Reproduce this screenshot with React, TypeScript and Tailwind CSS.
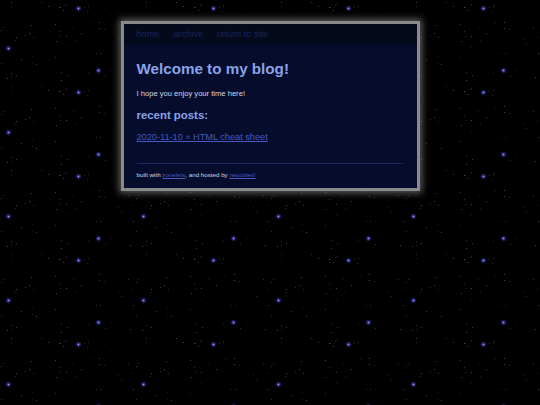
import React from 'react';

// faint background dust, generated once so every tile looks the same
const dust = (() => {
  let seed = 7;
  const rand = () => {
    seed = (seed * 9301 + 49297) % 233280;
    return seed / 233280;
  };
  return Array.from({ length: 60 }, () => ({
    x: Math.round(rand() * 134),
    y: Math.round(rand() * 83),
    o: 0.12 + rand() * 0.3,
  }));
})();

const blueStars = [
  { x: 8, y: 48 },
  { x: 98, y: 70 },
  { x: 78, y: 8 },
];

function StarField() {
  return (
    <svg className="absolute inset-0 h-full w-full" aria-hidden="true">
      <defs>
        <radialGradient id="glow">
          <stop offset="0%" stopColor="#9498ff" stopOpacity="0.95" />
          <stop offset="40%" stopColor="#4a4cd2" stopOpacity="0.6" />
          <stop offset="100%" stopColor="#202080" stopOpacity="0" />
        </radialGradient>
        <pattern id="stars" width="135" height="84" patternUnits="userSpaceOnUse">
          {dust.map((d, i) => (
            <rect key={i} x={d.x} y={d.y} width="1" height="1" fill="#bdbdbd" opacity={d.o} />
          ))}
          {blueStars.map((s, i) => (
            <g key={i}>
              <circle cx={s.x + 0.5} cy={s.y + 0.5} r="3.5" fill="url(#glow)" />
              <rect x={s.x} y={s.y} width="1" height="1" fill="#a4a8ff" opacity="0.85" />
            </g>
          ))}
        </pattern>
      </defs>
      <rect width="100%" height="100%" fill="url(#stars)" />
    </svg>
  );
}

export default function App() {
  return (
    <div className="relative min-h-screen overflow-hidden bg-black font-['Liberation_Sans',Arial,sans-serif]">
      <StarField />
      <div className="relative pt-[21px]">
        <div className="mx-auto w-[299px] border-[3px] border-[#8a8a8a] bg-[#050c2c] shadow-[0_0_7px_2px_rgba(170,170,170,0.55)]">
          <nav className="flex h-[21px] items-center gap-[14px] bg-[#040a1b] px-[13px] text-[9.2px] leading-none text-[#19225e]">
            <a href="#">home</a>
            <a href="#">archive</a>
            <a href="#">return to site</a>
          </nav>

          <main className="pl-[13px] pr-[14px] pb-[10px] pt-[15px]">
            <h1 className="text-[15.2px] font-bold leading-[17px] text-[#89a3e9]">Welcome to my blog!</h1>
            <p className="mt-[12px] text-[7.6px] leading-[9px] text-[#d6d8e2]">I hope you enjoy your time here!</p>

            <h2 className="mt-[11px] text-[11.4px] font-bold leading-[13px] text-[#89a3e9]">recent posts:</h2>
            <ul className="mt-[10px]">
              <li className="text-[9.2px] leading-[11px]">
                <a href="#" className="text-[#4658c2] underline">
                  2020-11-10 » HTML cheat sheet
                </a>
              </li>
            </ul>

            <hr className="mt-[20px] border-t border-[#1b2466]" />

            <footer className="mt-[7px] text-[6.2px] leading-[7px] text-[#d6d8e2]">
              built with{' '}
              <a href="#" className="text-[#4658c2] underline">
                zonelets
              </a>
              , and hosted by{' '}
              <a href="#" className="text-[#4658c2] underline">
                neocities!
              </a>
            </footer>
          </main>
        </div>
      </div>
    </div>
  );
}
